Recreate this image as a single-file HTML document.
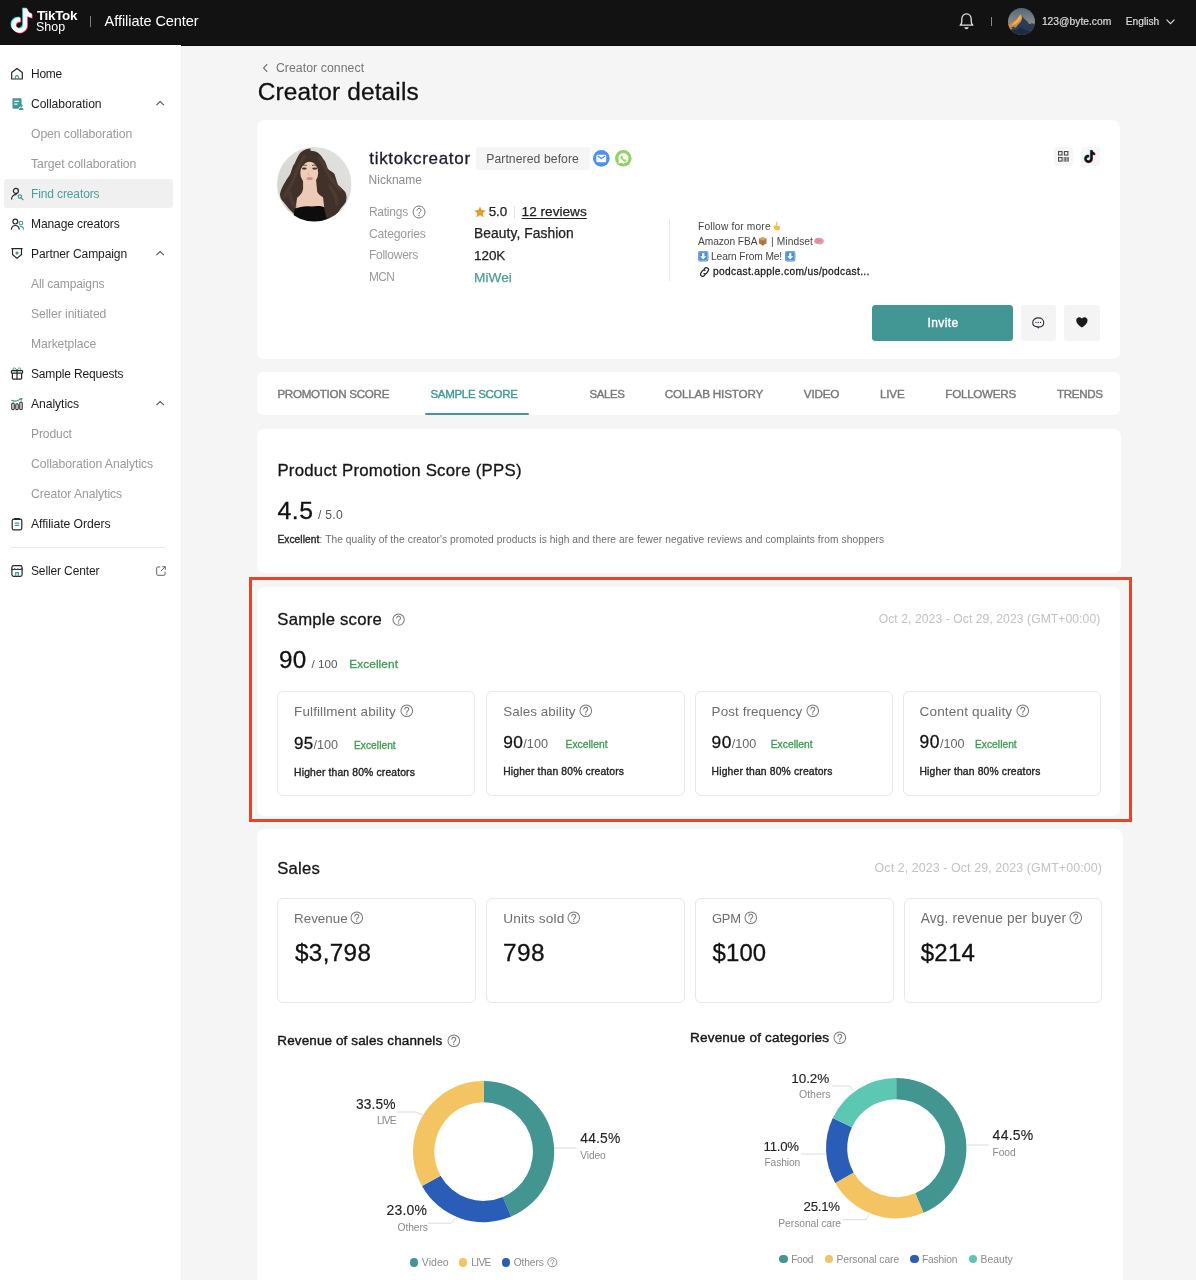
<!DOCTYPE html>
<html lang="en">
<head>
<meta charset="utf-8">
<title>Creator details</title>
<style>
*{box-sizing:border-box;margin:0;padding:0}
html,body{width:1196px;height:1280px;overflow:hidden;background:#f5f5f5;font-family:"Liberation Sans",sans-serif;color:#161616}
.a{position:absolute}
.t{position:absolute;white-space:nowrap}
svg{position:absolute;overflow:visible}
#hdr{position:absolute;left:0;top:0;width:1196px;height:45.6px;background:#121212;border-bottom:1px solid #0a0a0a}
#side{position:absolute;left:0;top:45px;width:180.5px;height:1236px;background:#fff;box-shadow:1px 0 2px rgba(0,0,0,.03)}
.card{position:absolute;background:#fff;border-radius:7px}
.sc{position:absolute;border:1px solid #e8e8e8;border-radius:6px;background:#fff}
.q{position:absolute;width:12px;height:12px}
</style>
</head>
<body>
<div id="hdr"></div>
<div id="side"></div>
<svg style="left:9px;top:7px" width="26" height="28" viewBox="0 0 17 17.5"><g transform="translate(0,.6)"><path d="M9.2 0h2.7c.2 1.7 1.3 3 3 3.3v2.7c-1.1 0-2.1-.3-3-.9v5.6c0 3-2.4 5.1-5.1 5.1C3.9 15.8 1.6 13.5 1.6 10.8c0-3.1 2.7-5.4 5.8-4.9v2.8c-1.5-.4-2.9.6-2.9 2.1 0 1.2 1 2.2 2.2 2.2 1.3 0 2.5-1 2.5-2.4z" fill="#25f4ee" transform="translate(-.55,-.45)"/><path d="M9.2 0h2.7c.2 1.7 1.3 3 3 3.3v2.7c-1.1 0-2.1-.3-3-.9v5.6c0 3-2.4 5.1-5.1 5.1C3.9 15.8 1.6 13.5 1.6 10.8c0-3.1 2.7-5.4 5.8-4.9v2.8c-1.5-.4-2.9.6-2.9 2.1 0 1.2 1 2.2 2.2 2.2 1.3 0 2.5-1 2.5-2.4z" fill="#fe2c55" transform="translate(.55,.45)"/><path d="M9.2 0h2.7c.2 1.7 1.3 3 3 3.3v2.7c-1.1 0-2.1-.3-3-.9v5.6c0 3-2.4 5.1-5.1 5.1C3.9 15.8 1.6 13.5 1.6 10.8c0-3.1 2.7-5.4 5.8-4.9v2.8c-1.5-.4-2.9.6-2.9 2.1 0 1.2 1 2.2 2.2 2.2 1.3 0 2.5-1 2.5-2.4z" fill="#fff"/></g></svg>
<div class="a" style="left:90px;top:15.5px;width:1px;height:11px;background:#7d7d7d;border-radius:0px;"></div>
<svg style="left:958px;top:11.5px" width="17" height="19" viewBox="0 0 17 19"><path d="M2.1 13.2c1.3-.9 1.7-2 1.7-3.6V7.3C3.8 4 5.7 1.8 8.5 1.8S13.2 4 13.2 7.3v2.3c0 1.6.4 2.7 1.7 3.6z" fill="none" stroke="#e2e2e2" stroke-width="1.3" stroke-linejoin="round"/><path d="M6.3 15.3h4.4c-.3 1.3-1.2 1.9-2.2 1.9s-1.9-.6-2.2-1.9z" fill="#e2e2e2"/></svg>
<div class="a" style="left:990.6px;top:17px;width:1px;height:8.5px;background:#8a8a8a;border-radius:0px;"></div>
<svg style="left:1008px;top:7.6px" width="27" height="27" viewBox="0 0 27 27"><defs><clipPath id="hc"><circle cx="13.5" cy="13.5" r="13.5"/></clipPath><filter id="hb"><feGaussianBlur stdDeviation=".45"/></filter><linearGradient id="sky" x1="0" y1="0" x2="0" y2="1"><stop offset="0" stop-color="#52667c"/><stop offset=".55" stop-color="#8a8c87"/></linearGradient></defs><g clip-path="url(#hc)"><rect width="27" height="27" fill="url(#sky)"/><g filter="url(#hb)"><path d="M-1 16.8L1.5 15.4L4.5 13.9L8.3 10.9L12.4 6.6L14.3 8.7L17.3 11.7L21.1 14.7L24.8 15.4L28 16.2V28H-1Z" fill="#2c3b54"/><path d="M-1 16.8L1.5 15.4L4.5 13.9L8.3 10.9L12.4 6.6L13.4 7.6L14.3 10.2L12.8 13.9L9.8 16.9L7.5 19.9L3.8 21.4L-1 22Z" fill="#cf8c42"/><path d="M12.4 6.6L13.2 7.5L13.4 10L11 13.5L7.5 16L3 17.5L6 14.5L9 11.5Z" fill="#eab062"/><path d="M19.5 14l2.5 1 1.8 1.2-3-.4z" fill="#cf8c42"/><path d="M-1 23l5-1.5 4 1 5-3 3 2 5 1.5 7 4V28H-1Z" fill="#1f2c42"/><path d="M3 19.5l3-1 2 1.5-3 1.5z" fill="#3a4860"/></g></g></svg>
<svg style="left:1165.5px;top:18.5px" width="9" height="5.5" viewBox="0 0 9 5.5"><path d="M.5 .6L4.5 4.6L8.5 .6" fill="none" stroke="#dcdcdc" stroke-width="1.1"/></svg>
<div class="a" style="left:4.2px;top:179.3px;width:169.2px;height:28.7px;background:#f0f0f0;border-radius:3px;"></div>
<svg style="left:10.4px;top:66.8px" width="14" height="14" viewBox="0 0 14 14"><path d="M1.7 5.5L7 1.5l5.3 4V12H1.7z" fill="none" stroke="#262626" stroke-width="1.2" stroke-linejoin="round"/><path d="M5.4 12V10.3a1.6 1.6 0 0 1 3.2 0V12" fill="none" stroke="#3f9a97" stroke-width="1.2"/></svg>
<svg style="left:11px;top:97px" width="14" height="14" viewBox="0 0 14 14"><path d="M1.5 1.2h8.3a.8.8 0 0 1 .8.8v5.3L7.3 11.8H2.3a.8.8 0 0 1-.8-.8z" fill="#3f9a97"/><rect x="3.3" y="3.7" width="4.8" height="1.2" fill="#fff"/><rect x="3.3" y="6.5" width="3.2" height="1.2" fill="#fff"/><circle cx="10.2" cy="8.6" r="1.45" fill="#3f9a97"/><path d="M7.9 12.9c0-1.5 1-2.5 2.3-2.5s2.3 1 2.3 2.5z" fill="#3f9a97"/></svg>
<svg style="left:10px;top:187px" width="15" height="14" viewBox="0 0 15 14"><circle cx="5.9" cy="3.9" r="2.5" fill="none" stroke="#262626" stroke-width="1.2"/><path d="M1.6 12.1c0-2.6 1.9-4.5 4.6-4.5" fill="none" stroke="#262626" stroke-width="1.2" stroke-linecap="round"/><circle cx="9.9" cy="9.6" r="1.7" fill="none" stroke="#3f9a97" stroke-width="1.2"/><path d="M11.2 10.9l1.9 1.8" stroke="#3f9a97" stroke-width="1.2" stroke-linecap="round"/></svg>
<svg style="left:10px;top:217.5px" width="15" height="13" viewBox="0 0 15 13"><circle cx="5.3" cy="3.6" r="2.4" fill="none" stroke="#262626" stroke-width="1.2"/><path d="M1.4 11.2c.3-2.3 1.8-3.7 3.9-3.7s3.6 1.4 3.9 3.7" fill="none" stroke="#262626" stroke-width="1.2" stroke-linecap="round"/><circle cx="10.9" cy="5" r="1.8" fill="none" stroke="#3f9a97" stroke-width="1.1"/><path d="M10.2 8.4c1.9-.3 3.1.9 3.3 2.7" fill="none" stroke="#3f9a97" stroke-width="1.1" stroke-linecap="round"/></svg>
<svg style="left:10.4px;top:247px" width="14" height="13" viewBox="0 0 14 13"><path d="M1.8 1.6h10.4M2.5 1.6v5.9L7 11.4l4.5-3.9V1.6" fill="none" stroke="#262626" stroke-width="1.2" stroke-linejoin="round" stroke-linecap="round"/><path d="M7 4.2l1.7 1.25-.65 2h-2.1l-.65-2z" fill="#3f9a97"/></svg>
<svg style="left:10.4px;top:366px" width="14" height="14.5" viewBox="0 0 14 14.5"><path d="M6.9 4.4C5.8 1.3 2.8 1.3 3.1 3.3c.2 1 1.7 1.1 3.8 1.1zM6.9 4.4C8 1.3 11 1.3 10.7 3.3c-.2 1-1.7 1.1-3.8 1.1z" fill="none" stroke="#3f9a97" stroke-width="1"/><rect x="1.4" y="4.6" width="11.2" height="2.6" rx=".8" fill="none" stroke="#262626" stroke-width="1.2"/><path d="M2.4 7.2v5.1a.8.8 0 0 0 .8.8h7.6a.8.8 0 0 0 .8-.8V7.2M7 4.6v8.5" fill="none" stroke="#262626" stroke-width="1.2"/></svg>
<svg style="left:10.4px;top:397px" width="14" height="14" viewBox="0 0 14 14"><rect x="1.8" y="6" width="2.4" height="6.7" rx="1.1" fill="none" stroke="#262626" stroke-width="1.1"/><rect x="5.8" y="6.8" width="2.4" height="5.9" rx="1.1" fill="none" stroke="#262626" stroke-width="1.1"/><rect x="9.8" y="5" width="2.4" height="7.7" rx="1.1" fill="none" stroke="#262626" stroke-width="1.1"/><path d="M1.6 3.3c2.5 1.4 5 1.3 8.3-.8" fill="none" stroke="#3f9a97" stroke-width="1.2" stroke-linecap="round"/><path d="M9.3.9l3.4.2-1.4 3z" fill="#3f9a97"/></svg>
<svg style="left:10.4px;top:516.5px" width="14" height="14" viewBox="0 0 14 14"><rect x="2.2" y="2.1" width="9.6" height="10.7" rx="1.5" fill="none" stroke="#262626" stroke-width="1.2"/><path d="M5 2h4" stroke="#262626" stroke-width="2.2" stroke-linecap="round"/><path d="M4.7 6.1h4.6M4.7 8.3h4.6" stroke="#3f9a97" stroke-width="1.2"/></svg>
<svg style="left:10.4px;top:564px" width="14" height="14" viewBox="0 0 14 14"><rect x="1.9" y="1.6" width="10.2" height="10.8" rx="1.8" fill="none" stroke="#262626" stroke-width="1.2"/><path d="M1.5 4.8c1 .9 2.2.9 3.2 0 1 .9 2.2.9 3.2 0 1 .9 2.2.9 3.2 0 .5.4.9.5 1.4.5" fill="none" stroke="#262626" stroke-width="1.1"/><path d="M5.7 12.2V8.6h2.6v3.6" fill="none" stroke="#3f9a97" stroke-width="1.2"/></svg>
<svg style="left:156.3px;top:101.4px" width="8.3" height="4.5" viewBox="0 0 8.3 4.5"><path d="M.4 4.2L4.15 .6L7.9 4.2" fill="none" stroke="#555" stroke-width="1.1"/></svg>
<svg style="left:156.3px;top:251.4px" width="8.3" height="4.5" viewBox="0 0 8.3 4.5"><path d="M.4 4.2L4.15 .6L7.9 4.2" fill="none" stroke="#555" stroke-width="1.1"/></svg>
<svg style="left:156.3px;top:401.4px" width="8.3" height="4.5" viewBox="0 0 8.3 4.5"><path d="M.4 4.2L4.15 .6L7.9 4.2" fill="none" stroke="#555" stroke-width="1.1"/></svg>
<div class="a" style="left:11px;top:546.5px;width:154px;height:1px;background:#e9e9e9;border-radius:0px;"></div>
<svg style="left:155.5px;top:565.8px" width="10" height="10" viewBox="0 0 10 10"><path d="M4.3 1H1.7a1 1 0 0 0-1 1v6.3a1 1 0 0 0 1 1H8a1 1 0 0 0 1-1V5.7" fill="none" stroke="#666" stroke-width="1"/><path d="M6.2.7h3.1v3.1M9.2.8L4.9 5.1" fill="none" stroke="#666" stroke-width="1"/></svg>
<svg style="left:261.5px;top:62.5px" width="7" height="10" viewBox="0 0 7 10"><path d="M5.2 1.2L1.6 5l3.6 3.8" fill="none" stroke="#6b6b6b" stroke-width="1.1"/></svg>
<div class="a" style="left:257px;top:120px;width:863.3px;height:238.8px;background:#fff;border-radius:7px;"></div>
<svg style="left:276.9px;top:146.9px" width="74.5" height="74.5" viewBox="0 0 100 100"><defs><clipPath id="ac"><circle cx="50" cy="50" r="50"/></clipPath><filter id="bl" x="-20%" y="-20%" width="140%" height="140%"><feGaussianBlur stdDeviation="0.9"/></filter><filter id="bl2" x="-20%" y="-20%" width="140%" height="140%"><feGaussianBlur stdDeviation="1.6"/></filter><linearGradient id="abg" x1="0" y1="1" x2="1" y2="0"><stop offset="0" stop-color="#d2d3ce"/><stop offset="1" stop-color="#e3e4e1"/></linearGradient></defs><g clip-path="url(#ac)"><rect width="100" height="100" fill="url(#abg)"/><g filter="url(#bl)"><path d="M45 2C38 2 32 6 29 11c-4 6-5 13-7 13-2 5-3 9-4 12-2 4-5 7-7 11-3 5-6 10-7 16 0 5 2 8 5 11l7 9 8 8 30 8 18-3 8-5c3-4 5-8 7-10 3-4 6-7 6-10 1-4 0-7-1-10-2-3-6-6-10-10-2-4-3-10-5-15-3-3-7-4-9-7-2-6-3-10-6-13-3-5-7-11-17-11z" fill="#40302a"/><path d="M35 40h17l2 20c1 3 4 5 9 8l2 14c-6 4-30 4-40 0l2-14c4-3 7-6 8-12z" fill="#eccab6"/><ellipse cx="43.3" cy="35" rx="12" ry="15.2" fill="#efccb8"/><path d="M30 32C29 20 34 11 45 10c8 1 12 8 12 20-2-5-5-9-12-11.500-6 1.500-11 5.500-15 13.500z" fill="#40302a"/><path d="M31 30c-2 8-2 16 1 24-3 6-7 12-8 20-1 6 0 12 2 18l-9-9-7-10 6-18 6-16z" fill="#40302a"/><path d="M55 28c2 8 3 15 1 24 2 5 5 8 7 13 2 8 1 18 4 30l8-1 6-12-3-20-8-20-9-14z" fill="#40302a"/><path d="M24 83c7-3 14-4 22-3 7-1 13-1 18 1l4 22H20z" fill="#0c0c0c"/><path d="M60 60c3 8 2 18 6 34l6 2 6-12-4-18z" fill="#40302a"/></g><g filter="url(#bl2)" fill="none" stroke="#6a5246" stroke-width="2.2" opacity=".7"><path d="M38 12c-8 8-12 20-16 32-3 8-9 14-12 24"/><path d="M56 14c8 8 10 20 16 28 4 6 10 10 14 18"/><path d="M70 50c4 10 12 14 10 28"/><path d="M18 60c-2 8 2 14 8 22"/></g><g filter="url(#bl)"><ellipse cx="36.6" cy="29" rx="3.4" ry="1.5" fill="#40393a"/><ellipse cx="50.6" cy="29" rx="3.4" ry="1.5" fill="#40393a"/><path d="M32.5 25.5c2.5-1.5 5-1.5 7.5-.5M47 25c2.5-1 5-1 7.5.5" stroke="#4a3a34" stroke-width="1.2" fill="none"/><ellipse cx="43.8" cy="42.3" rx="4.4" ry="2.1" fill="#d18e8c"/><path d="M43 32l-1.5 5.5h3" stroke="#dcb29c" stroke-width="1" fill="none"/></g></g></svg>
<div class="a" style="left:476px;top:147px;width:113.5px;height:22.6px;background:#f5f5f5;border-radius:3px;"></div>
<svg style="left:593px;top:150px" width="16.7" height="16.7" viewBox="0 0 16.7 16.7"><circle cx="8.35" cy="8.35" r="8.35" fill="#4a90f5"/><rect x="3.3" y="4.8" width="9.9" height="7.5" rx="1.2" fill="#fff"/><path d="M5.1 6.3l3.25 2.3 3.25-2.3" fill="none" stroke="#4a90f5" stroke-width="1.3" stroke-linecap="round" stroke-linejoin="round"/></svg>
<svg style="left:614.6px;top:150px" width="16.6" height="16.6" viewBox="0 0 16.6 16.6"><circle cx="8.3" cy="8.3" r="8.3" fill="#8ed45f"/><path d="M8.4 3.1a5.2 5.2 0 1 1-2.6 9.7l-2.6.8.8-2.5A5.2 5.2 0 0 1 8.4 3.1z" fill="#fff"/><path d="M6.3 5.8c.5-.5 1-.3 1.2.3l.3.8c.1.3 0 .5-.3.8.4.9 1 1.5 1.9 1.9.3-.3.6-.4.9-.2l.7.4c.5.3.6.8.1 1.3-.7.6-1.6.5-2.7-.1-1.3-.7-2.2-1.7-2.7-3-.3-.9-.1-1.6.6-2.2z" fill="#8ed45f"/></svg>
<svg style="left:412.1px;top:204.7px" width="14.0" height="14.0" viewBox="-7 -7 14 14"><circle r="6" fill="none" stroke="#7a7a7a" stroke-width="1.00"/><path d="M-2 -1.7a2 2 0 1 1 3.1 1.7c-.8.5-1.1.9-1.1 1.7" fill="none" stroke="#7a7a7a" stroke-width="1.00" stroke-linecap="round"/><circle cx="0" cy="3.6" r=".75" fill="#7a7a7a"/></svg>
<svg style="left:473.8px;top:206.2px" width="12" height="11.5" viewBox="0 0 24 23"><path d="M12 .8l3.5 7.3 8 1-5.9 5.5 1.5 7.9L12 18.6l-7.1 3.9 1.5-7.9L.5 9.1l8-1z" fill="#dfa02e"/></svg>
<div class="a" style="left:514px;top:205.5px;width:1px;height:13px;background:#e4e4e4;border-radius:0px;"></div>
<div class="a" style="left:668.5px;top:219px;width:1px;height:61.5px;background:#e6e6e6;border-radius:0px;"></div>
<svg style="left:771.5px;top:220.5px" width="9" height="10" viewBox="0 0 9 10"><path d="M4.6.6c.9-.3 1.2.3 1 .9L4.9 4.5 7.3 5c.9.3 1 1.1.8 2l-.4 1.5c-.3.9-.9 1.2-1.8 1.1L3.7 9.3C2.7 9.1 2.2 8.6 2 7.8L1.5 5.9c-.2-.8.4-1.4 1.2-1.3l.9.1z" fill="#f5c04a"/></svg>
<svg style="left:758.2px;top:235.8px" width="9.5" height="9.5" viewBox="0 0 10 10"><path d="M1 3l4-2 4 2v5L5 10 1 8z" fill="#b07a45"/><path d="M1 3l4 2 4-2-4-2z" fill="#d6a56a"/><path d="M5 5v5" stroke="#8a5a2d" stroke-width=".6"/></svg>
<svg style="left:813.2px;top:236.6px" width="11.5" height="8.5" viewBox="0 0 12 9"><path d="M1 4.5C1 2 3.5 .8 6 .8s5.4 1 5.4 3.6c0 1.7-1.3 2.8-3 3l-.8 1.2-1.2-1.1C3.5 7.6 1 6.8 1 4.5z" fill="#e79aa8"/><path d="M3 3.5c1-.8 2-.8 3 0s2 .8 3 0M3.5 5.5c1-.6 2-.6 3 0" fill="none" stroke="#c9687c" stroke-width=".6"/></svg>
<svg style="left:697.5px;top:250.6px" width="10.4" height="10.4" viewBox="0 0 10.4 10.4"><rect width="10.4" height="10.4" rx="2" fill="#4f8fd6"/><rect x=".8" y=".8" width="8.8" height="8.8" rx="1.4" fill="none" stroke="#9cc2ec" stroke-width=".7"/><path d="M4 2.3h2.4v3h1.9L5.2 8.6 2.1 5.3H4z" fill="#fff"/></svg>
<svg style="left:785.4px;top:250.6px" width="10.4" height="10.4" viewBox="0 0 10.4 10.4"><rect width="10.4" height="10.4" rx="2" fill="#4f8fd6"/><rect x=".8" y=".8" width="8.8" height="8.8" rx="1.4" fill="none" stroke="#9cc2ec" stroke-width=".7"/><path d="M4 2.3h2.4v3h1.9L5.2 8.6 2.1 5.3H4z" fill="#fff"/></svg>
<svg style="left:699px;top:266.8px" width="11" height="10" viewBox="0 0 11 10"><g fill="none" stroke="#222" stroke-width="1.2" stroke-linecap="round" transform="rotate(-12 5.5 5)"><path d="M4.6 6.4a2.1 2.1 0 0 0 3 0l1.7-1.7a2.1 2.1 0 0 0-3-3l-.8.8"/><path d="M6.4 3.6a2.1 2.1 0 0 0-3 0L1.7 5.3a2.1 2.1 0 0 0 3 3l.8-.8"/></g></svg>
<div class="a" style="left:1054px;top:146.6px;width:19.4px;height:19.5px;background:#f6f6f6;border-radius:3.5px;"></div>
<div class="a" style="left:1080.5px;top:146.6px;width:19.2px;height:19.5px;background:#f6f6f6;border-radius:3.5px;"></div>
<svg style="left:1057.8px;top:151px" width="10.5" height="10.7" viewBox="0 0 10.5 10.7"><g fill="none" stroke="#4a4a4a" stroke-width="1.1"><rect x=".55" y=".55" width="3.5" height="3.5"/><rect x="6.4" y=".55" width="3.5" height="3.5"/><rect x=".55" y="6.6" width="3.5" height="3.5"/></g><path d="M6.2 6v4.7M7.7 6v4.7M9.1 6v4.7M10.3 6v4.7" stroke="#4a4a4a" stroke-width=".9"/></svg>
<svg style="left:1082.8px;top:149.7px" width="13.5" height="13.5" viewBox="0 0 17 16.5"><path d="M9.2 0h2.7c.2 1.7 1.3 3 3 3.3v2.7c-1.1 0-2.1-.3-3-.9v5.6c0 3-2.4 5.1-5.1 5.1C3.9 15.8 1.6 13.5 1.6 10.8c0-3.1 2.7-5.4 5.8-4.9v2.8c-1.5-.4-2.9.6-2.9 2.1 0 1.2 1 2.2 2.2 2.2 1.3 0 2.5-1 2.5-2.4z" fill="#25f4ee" transform="translate(-.7,-.5)"/><path d="M9.2 0h2.7c.2 1.7 1.3 3 3 3.3v2.7c-1.1 0-2.1-.3-3-.9v5.6c0 3-2.4 5.1-5.1 5.1C3.9 15.8 1.6 13.5 1.6 10.8c0-3.1 2.7-5.4 5.8-4.9v2.8c-1.5-.4-2.9.6-2.9 2.1 0 1.2 1 2.2 2.2 2.2 1.3 0 2.5-1 2.5-2.4z" fill="#fe2c55" transform="translate(.7,.5)"/><path d="M9.2 0h2.7c.2 1.7 1.3 3 3 3.3v2.7c-1.1 0-2.1-.3-3-.9v5.6c0 3-2.4 5.1-5.1 5.1C3.9 15.8 1.6 13.5 1.6 10.8c0-3.1 2.7-5.4 5.8-4.9v2.8c-1.5-.4-2.9.6-2.9 2.1 0 1.2 1 2.2 2.2 2.2 1.3 0 2.5-1 2.5-2.4z" fill="#111"/></svg>
<div class="a" style="left:872.3px;top:305px;width:141px;height:35.8px;background:#429693;border-radius:3.5px;"></div>
<div class="a" style="left:1020.6px;top:305px;width:35.7px;height:35.8px;background:#f4f4f4;border-radius:3px;"></div>
<div class="a" style="left:1064.1px;top:305px;width:35.7px;height:35.8px;background:#f4f4f4;border-radius:3px;"></div>
<svg style="left:1032.4px;top:317px" width="12.5" height="12" viewBox="0 0 12.5 12"><path d="M6.2 .9c3.1 0 5.5 1.9 5.5 4.5S9.6 9.8 6.9 9.9l-.6.9-.7-.9C2.9 9.7.7 7.9.7 5.4S3.1.9 6.2.9z" fill="none" stroke="#2a2d3e" stroke-width="1.1"/><circle cx="3.9" cy="5.4" r=".65" fill="#2a2d3e"/><circle cx="6.2" cy="5.4" r=".65" fill="#2a2d3e"/><circle cx="8.5" cy="5.4" r=".65" fill="#2a2d3e"/></svg>
<svg style="left:1076px;top:317.4px" width="11.8" height="10.8" viewBox="0 0 24 22"><path d="M12 21.5C5.5 16.5.5 12.3.5 6.9.5 3.3 3.2.6 6.6.6c2.2 0 4.2 1.1 5.4 2.9C13.2 1.7 15.2.6 17.4.6c3.4 0 6.1 2.7 6.1 6.3 0 5.4-5 9.6-11.5 14.6z" fill="#1a1a1a"/></svg>
<div class="a" style="left:257px;top:372.2px;width:863.3px;height:42.6px;background:#fff;border-radius:6px;"></div>
<div class="a" style="left:425px;top:412.8px;width:103.8px;height:2.4px;background:#3f9a97;border-radius:1.2px;"></div>
<div class="a" style="left:257px;top:429.4px;width:863.5px;height:143.9px;background:#fff;border-radius:7px;"></div>
<div class="a" style="left:249px;top:577px;width:883.3px;height:245px;border:3px solid #e8432c"></div>
<div class="a" style="left:257px;top:587px;width:863.3px;height:228.8px;background:#fff;border-radius:7px;"></div>
<svg style="left:391.6px;top:612.9px" width="13.2" height="13.2" viewBox="-7 -7 14 14"><circle r="6" fill="none" stroke="#777" stroke-width="1.07"/><path d="M-2 -1.7a2 2 0 1 1 3.1 1.7c-.8.5-1.1.9-1.1 1.7" fill="none" stroke="#777" stroke-width="1.07" stroke-linecap="round"/><circle cx="0" cy="3.6" r=".75" fill="#777"/></svg>
<div class="sc" style="left:277.3px;top:691.2px;width:198.2px;height:104.4px"></div>
<div class="sc" style="left:486.4px;top:691.2px;width:198.2px;height:104.4px"></div>
<div class="sc" style="left:694.8px;top:691.2px;width:198.2px;height:104.4px"></div>
<div class="sc" style="left:902.7px;top:691.2px;width:198.2px;height:104.4px"></div>
<svg style="left:400.0px;top:704.1px" width="13.6" height="13.6" viewBox="-7 -7 14 14"><circle r="6" fill="none" stroke="#777" stroke-width="1.03"/><path d="M-2 -1.7a2 2 0 1 1 3.1 1.7c-.8.5-1.1.9-1.1 1.7" fill="none" stroke="#777" stroke-width="1.03" stroke-linecap="round"/><circle cx="0" cy="3.6" r=".75" fill="#777"/></svg>
<svg style="left:579.2px;top:704.1px" width="13.6" height="13.6" viewBox="-7 -7 14 14"><circle r="6" fill="none" stroke="#777" stroke-width="1.03"/><path d="M-2 -1.7a2 2 0 1 1 3.1 1.7c-.8.5-1.1.9-1.1 1.7" fill="none" stroke="#777" stroke-width="1.03" stroke-linecap="round"/><circle cx="0" cy="3.6" r=".75" fill="#777"/></svg>
<svg style="left:806.4px;top:704.1px" width="13.6" height="13.6" viewBox="-7 -7 14 14"><circle r="6" fill="none" stroke="#777" stroke-width="1.03"/><path d="M-2 -1.7a2 2 0 1 1 3.1 1.7c-.8.5-1.1.9-1.1 1.7" fill="none" stroke="#777" stroke-width="1.03" stroke-linecap="round"/><circle cx="0" cy="3.6" r=".75" fill="#777"/></svg>
<svg style="left:1016.2px;top:704.1px" width="13.6" height="13.6" viewBox="-7 -7 14 14"><circle r="6" fill="none" stroke="#777" stroke-width="1.03"/><path d="M-2 -1.7a2 2 0 1 1 3.1 1.7c-.8.5-1.1.9-1.1 1.7" fill="none" stroke="#777" stroke-width="1.03" stroke-linecap="round"/><circle cx="0" cy="3.6" r=".75" fill="#777"/></svg>
<div class="a" style="left:257px;top:828.8px;width:865.7px;height:470px;background:#fff;border-radius:7px;"></div>
<div class="sc" style="left:277.3px;top:897.6px;width:198.4px;height:105px"></div>
<div class="sc" style="left:486.4px;top:897.6px;width:198.4px;height:105px"></div>
<div class="sc" style="left:695.3px;top:897.6px;width:198.4px;height:105px"></div>
<div class="sc" style="left:903.9px;top:897.6px;width:198.4px;height:105px"></div>
<svg style="left:350.0px;top:910.7px" width="13.6" height="13.6" viewBox="-7 -7 14 14"><circle r="6" fill="none" stroke="#777" stroke-width="1.03"/><path d="M-2 -1.7a2 2 0 1 1 3.1 1.7c-.8.5-1.1.9-1.1 1.7" fill="none" stroke="#777" stroke-width="1.03" stroke-linecap="round"/><circle cx="0" cy="3.6" r=".75" fill="#777"/></svg>
<svg style="left:567.1px;top:910.7px" width="13.6" height="13.6" viewBox="-7 -7 14 14"><circle r="6" fill="none" stroke="#777" stroke-width="1.03"/><path d="M-2 -1.7a2 2 0 1 1 3.1 1.7c-.8.5-1.1.9-1.1 1.7" fill="none" stroke="#777" stroke-width="1.03" stroke-linecap="round"/><circle cx="0" cy="3.6" r=".75" fill="#777"/></svg>
<svg style="left:743.8px;top:910.7px" width="13.6" height="13.6" viewBox="-7 -7 14 14"><circle r="6" fill="none" stroke="#777" stroke-width="1.03"/><path d="M-2 -1.7a2 2 0 1 1 3.1 1.7c-.8.5-1.1.9-1.1 1.7" fill="none" stroke="#777" stroke-width="1.03" stroke-linecap="round"/><circle cx="0" cy="3.6" r=".75" fill="#777"/></svg>
<svg style="left:1068.5px;top:910.7px" width="13.6" height="13.6" viewBox="-7 -7 14 14"><circle r="6" fill="none" stroke="#777" stroke-width="1.03"/><path d="M-2 -1.7a2 2 0 1 1 3.1 1.7c-.8.5-1.1.9-1.1 1.7" fill="none" stroke="#777" stroke-width="1.03" stroke-linecap="round"/><circle cx="0" cy="3.6" r=".75" fill="#777"/></svg>
<svg style="left:446.7px;top:1033.9px" width="13.6" height="13.6" viewBox="-7 -7 14 14"><circle r="6" fill="none" stroke="#777" stroke-width="1.03"/><path d="M-2 -1.7a2 2 0 1 1 3.1 1.7c-.8.5-1.1.9-1.1 1.7" fill="none" stroke="#777" stroke-width="1.03" stroke-linecap="round"/><circle cx="0" cy="3.6" r=".75" fill="#777"/></svg>
<svg style="left:833.3px;top:1030.7px" width="13.6" height="13.6" viewBox="-7 -7 14 14"><circle r="6" fill="none" stroke="#777" stroke-width="1.03"/><path d="M-2 -1.7a2 2 0 1 1 3.1 1.7c-.8.5-1.1.9-1.1 1.7" fill="none" stroke="#777" stroke-width="1.03" stroke-linecap="round"/><circle cx="0" cy="3.6" r=".75" fill="#777"/></svg>
<svg style="left:412.8px;top:1081.0px" width="141.2" height="141.2" viewBox="-70.6 -70.6 141.2 141.2"><path d="M0.00 -70.60A70.6 70.6 0 0 1 27.59 64.99L19.26 45.38A49.3 49.3 0 0 0 0.00 -49.30Z" fill="#439591"/><path d="M27.59 64.99A70.6 70.6 0 0 1 -61.63 34.44L-43.04 24.05A49.3 49.3 0 0 0 19.26 45.38Z" fill="#2a5db8"/><path d="M-61.63 34.44A70.6 70.6 0 0 1 -0.00 -70.60L-0.00 -49.30A49.3 49.3 0 0 0 -43.04 24.05Z" fill="#f5c462"/></svg>
<svg style="left:552.6px;top:1147.4px" width="24.7" height="2.0"><path d="M1.0 1.0L23.7 1.0" fill="none" stroke="#dcdcdc" stroke-width="1"/></svg>
<svg style="left:395.5px;top:1110.5px" width="29.3" height="6.0"><path d="M1.0 1.0L19.9 1.0L28.3 5.0" fill="none" stroke="#dcdcdc" stroke-width="1"/></svg>
<svg style="left:427.0px;top:1216.5px" width="29.5" height="7.2"><path d="M1.0 6.2L24.5 6.2L28.5 1.0" fill="none" stroke="#dcdcdc" stroke-width="1"/></svg>
<div class="a" style="left:410.0px;top:1258.2px;width:8.4px;height:8.4px;border-radius:50%;background:#439591"></div>
<div class="a" style="left:458.5px;top:1258.2px;width:8.4px;height:8.4px;border-radius:50%;background:#f5c462"></div>
<div class="a" style="left:501.5px;top:1258.2px;width:8.4px;height:8.4px;border-radius:50%;background:#2a5db8"></div>
<svg style="left:546.5px;top:1257.1px" width="10.6" height="10.6" viewBox="-7 -7 14 14"><circle r="6" fill="none" stroke="#8a8a8a" stroke-width="1.26"/><path d="M-2 -1.7a2 2 0 1 1 3.1 1.7c-.8.5-1.1.9-1.1 1.7" fill="none" stroke="#8a8a8a" stroke-width="1.26" stroke-linecap="round"/><circle cx="0" cy="3.6" r=".75" fill="#8a8a8a"/></svg>
<svg style="left:826.1px;top:1077.9px" width="140.4" height="140.4" viewBox="-70.2 -70.2 140.4 140.4"><path d="M0.00 -70.20A70.2 70.2 0 0 1 27.32 64.67L19.07 45.14A49 49 0 0 0 0.00 -49.00Z" fill="#439591"/><path d="M27.32 64.67A70.2 70.2 0 0 1 -60.98 34.78L-42.56 24.28A49 49 0 0 0 19.07 45.14Z" fill="#f5c462"/><path d="M-60.98 34.78A70.2 70.2 0 0 1 -63.41 -30.11L-44.26 -21.02A49 49 0 0 0 -42.56 24.28Z" fill="#2a5db8"/><path d="M-63.41 -30.11A70.2 70.2 0 0 1 -0.00 -70.20L-0.00 -49.00A49 49 0 0 0 -44.26 -21.02Z" fill="#5cc8b4"/></svg>
<svg style="left:965.3px;top:1144.2px" width="24.7" height="2.0"><path d="M1.0 1.0L23.7 1.0" fill="none" stroke="#dcdcdc" stroke-width="1"/></svg>
<svg style="left:830.7px;top:1085.2px" width="23.7" height="7.2"><path d="M1.0 1.0L18.7 1.0L22.7 6.2" fill="none" stroke="#dcdcdc" stroke-width="1"/></svg>
<svg style="left:800.2px;top:1153.0px" width="26.5" height="2.0"><path d="M1.0 1.0L25.5 1.0" fill="none" stroke="#dcdcdc" stroke-width="1"/></svg>
<svg style="left:841.5px;top:1212.8px" width="28.1" height="7.7"><path d="M1.0 6.7L23.9 6.7L27.1 1.0" fill="none" stroke="#dcdcdc" stroke-width="1"/></svg>
<div class="a" style="left:779.3px;top:1255.0px;width:8.4px;height:8.4px;border-radius:50%;background:#439591"></div>
<div class="a" style="left:824.7px;top:1255.0px;width:8.4px;height:8.4px;border-radius:50%;background:#f5c462"></div>
<div class="a" style="left:910.2px;top:1255.0px;width:8.4px;height:8.4px;border-radius:50%;background:#2a5db8"></div>
<div class="a" style="left:968.8px;top:1255.0px;width:8.4px;height:8.4px;border-radius:50%;background:#5cc8b4"></div>
<div id="tx" style="position:absolute;left:0;top:0;width:1196px;height:1280px;will-change:transform">
<div class="t" style="left:36.9px;top:7px;font-size:13.45px;line-height:17px;color:#fff;letter-spacing:-0.29px;font-weight:bold;">TikTok</div>
<div class="t" style="left:36.0px;top:19px;font-size:12.4px;line-height:16px;color:#fff;letter-spacing:0.06px;">Shop</div>
<div class="t" style="left:104.6px;top:12px;font-size:14.5px;line-height:18px;color:#fff;letter-spacing:-0.05px;">Affiliate Center</div>
<div class="t" style="left:1041.9px;top:15px;font-size:10.31px;line-height:13px;color:#dcdcdc;-webkit-text-stroke:.2px #dcdcdc">123@byte.com</div>
<div class="t" style="left:1125.8px;top:15px;font-size:10.24px;line-height:13px;color:#dcdcdc;letter-spacing:-0.03px;-webkit-text-stroke:.2px #dcdcdc">English</div>
<div class="t" style="left:31.0px;top:66px;font-size:11.96px;line-height:16px;color:#1d1d1d;letter-spacing:-0.23px;">Home</div>
<div class="t" style="left:31.0px;top:96px;font-size:12.14px;line-height:16px;color:#1d1d1d;letter-spacing:-0.07px;">Collaboration</div>
<div class="t" style="left:31.0px;top:126px;font-size:12.18px;line-height:16px;color:#999;letter-spacing:-0.06px;">Open collaboration</div>
<div class="t" style="left:31.0px;top:156px;font-size:12.18px;line-height:16px;color:#999;letter-spacing:-0.05px;">Target collaboration</div>
<div class="t" style="left:31.0px;top:186px;font-size:12.02px;line-height:16px;color:#4a9f9c;letter-spacing:-0.13px;">Find creators</div>
<div class="t" style="left:31.0px;top:216px;font-size:12.06px;line-height:16px;color:#1d1d1d;letter-spacing:-0.12px;">Manage creators</div>
<div class="t" style="left:31.0px;top:246px;font-size:12.07px;line-height:16px;color:#1d1d1d;letter-spacing:-0.12px;">Partner Campaign</div>
<div class="t" style="left:31.0px;top:276px;font-size:12.05px;line-height:16px;color:#999;letter-spacing:-0.12px;">All campaigns</div>
<div class="t" style="left:31.0px;top:306px;font-size:12.15px;line-height:16px;color:#999;letter-spacing:-0.06px;">Seller initiated</div>
<div class="t" style="left:31.0px;top:336px;font-size:12.14px;line-height:16px;color:#999;letter-spacing:-0.08px;">Marketplace</div>
<div class="t" style="left:31.0px;top:366px;font-size:12.0px;line-height:16px;color:#1d1d1d;letter-spacing:-0.16px;">Sample Requests</div>
<div class="t" style="left:31.0px;top:396px;font-size:12.16px;line-height:16px;color:#1d1d1d;letter-spacing:-0.06px;">Analytics</div>
<div class="t" style="left:31.0px;top:426px;font-size:12.08px;line-height:16px;color:#999;letter-spacing:-0.11px;">Product</div>
<div class="t" style="left:31.0px;top:456px;font-size:12.2px;line-height:16px;color:#999;letter-spacing:-0.05px;">Collaboration Analytics</div>
<div class="t" style="left:31.0px;top:486px;font-size:12.18px;line-height:16px;color:#999;letter-spacing:-0.05px;">Creator Analytics</div>
<div class="t" style="left:31.0px;top:516px;font-size:12.18px;line-height:16px;color:#1d1d1d;letter-spacing:-0.05px;">Affiliate Orders</div>
<div class="t" style="left:31.0px;top:563px;font-size:12.01px;line-height:16px;color:#1d1d1d;letter-spacing:-0.13px;">Seller Center</div>
<div class="t" style="left:275.9px;top:60px;font-size:12.31px;line-height:16px;color:#757575;letter-spacing:0.05px;">Creator connect</div>
<div class="t" style="left:257.8px;top:77px;font-size:24.39px;line-height:29px;color:#121212;letter-spacing:0.17px;-webkit-text-stroke:.3px #121212">Creator details</div>
<div class="t" style="left:369.3px;top:148px;font-size:17px;line-height:21px;color:#1b1c30;letter-spacing:0.68px;-webkit-text-stroke:.3px #1b1c30">tiktokcreator</div>
<div class="t" style="left:486.2px;top:151px;font-size:12.18px;line-height:16px;color:#555;letter-spacing:0.09px;">Partnered before</div>
<div class="t" style="left:368.6px;top:172px;font-size:12.0px;line-height:16px;color:#8c8c8c;">Nickname</div>
<div class="t" style="left:368.9px;top:204px;font-size:12.0px;line-height:16px;color:#9a9a9a;letter-spacing:-0.24px;">Ratings</div>
<div class="t" style="left:368.9px;top:226px;font-size:12.13px;line-height:16px;color:#9a9a9a;letter-spacing:-0.18px;">Categories</div>
<div class="t" style="left:368.9px;top:247px;font-size:12.0px;line-height:16px;color:#9a9a9a;letter-spacing:-0.24px;">Followers</div>
<div class="t" style="left:368.9px;top:269px;font-size:11.88px;line-height:16px;color:#9a9a9a;letter-spacing:-0.58px;">MCN</div>
<div class="t" style="left:488.7px;top:203px;font-size:13.45px;line-height:17px;color:#222;letter-spacing:-0.07px;-webkit-text-stroke:.25px #222">5.0</div>
<div class="t" style="left:521.6px;top:203px;font-size:13.62px;line-height:17px;color:#222;letter-spacing:0.01px;text-decoration:underline;text-underline-offset:2px;text-decoration-thickness:1px;-webkit-text-stroke:.25px #222">12 reviews</div>
<div class="t" style="left:474.1px;top:225px;font-size:13.77px;line-height:17px;color:#222;letter-spacing:0.08px;-webkit-text-stroke:.25px #222">Beauty, Fashion</div>
<div class="t" style="left:474.1px;top:247px;font-size:13.48px;line-height:17px;color:#222;letter-spacing:-0.07px;-webkit-text-stroke:.25px #222">120K</div>
<div class="t" style="left:474.1px;top:269px;font-size:13.63px;line-height:17px;color:#4a9e9b;letter-spacing:0.02px;-webkit-text-stroke:.25px #4a9e9b">MiWei</div>
<div class="t" style="left:698.0px;top:220px;font-size:10.2px;line-height:13px;color:#444;letter-spacing:0.17px;">Follow for more</div>
<div class="t" style="left:698.0px;top:235px;font-size:10.2px;line-height:13px;color:#444;letter-spacing:-0.05px;">Amazon FBA</div>
<div class="t" style="left:771.0px;top:235px;font-size:10.2px;line-height:13px;color:#444;letter-spacing:0.10px;">| Mindset</div>
<div class="t" style="left:711.0px;top:250px;font-size:10.2px;line-height:13px;color:#444;letter-spacing:-0.10px;">Learn From Me!</div>
<div class="t" style="left:713.0px;top:265px;font-size:10.2px;line-height:13px;color:#1d1d1d;letter-spacing:0.34px;-webkit-text-stroke:.28px #1d1d1d">podcast.apple.com/us/podcast...</div>
<div class="t" style="left:927.5px;top:315px;font-size:12px;line-height:16px;color:#fff;letter-spacing:0.39px;-webkit-text-stroke:.4px #fff">Invite</div>
<div class="t" style="left:277.4px;top:387px;font-size:11.59px;line-height:14px;color:#787878;letter-spacing:-0.27px;-webkit-text-stroke:.4px #787878">PROMOTION SCORE</div>
<div class="t" style="left:430.4px;top:387px;font-size:11.53px;line-height:14px;color:#3f9a97;letter-spacing:-0.31px;-webkit-text-stroke:.4px #3f9a97">SAMPLE SCORE</div>
<div class="t" style="left:589.5px;top:387px;font-size:11.43px;line-height:14px;color:#787878;letter-spacing:-0.37px;-webkit-text-stroke:.4px #787878">SALES</div>
<div class="t" style="left:664.8px;top:386px;font-size:11.69px;line-height:15px;color:#787878;letter-spacing:-0.19px;-webkit-text-stroke:.4px #787878">COLLAB HISTORY</div>
<div class="t" style="left:803.8px;top:386px;font-size:11.69px;line-height:15px;color:#787878;letter-spacing:-0.19px;-webkit-text-stroke:.4px #787878">VIDEO</div>
<div class="t" style="left:880.0px;top:386px;font-size:11.65px;line-height:15px;color:#787878;letter-spacing:-0.19px;-webkit-text-stroke:.4px #787878">LIVE</div>
<div class="t" style="left:945.3px;top:386px;font-size:11.63px;line-height:15px;color:#787878;letter-spacing:-0.26px;-webkit-text-stroke:.4px #787878">FOLLOWERS</div>
<div class="t" style="left:1057.0px;top:387px;font-size:11.57px;line-height:14px;color:#787878;letter-spacing:-0.30px;-webkit-text-stroke:.4px #787878">TRENDS</div>
<div class="t" style="left:277.4px;top:460px;font-size:16.81px;line-height:21px;color:#161616;letter-spacing:0.25px;-webkit-text-stroke:.3px #161616">Product Promotion Score (PPS)</div>
<div class="t" style="left:277.4px;top:496px;font-size:24.78px;line-height:29px;color:#121212;letter-spacing:0.55px;-webkit-text-stroke:.3px #121212">4.5</div>
<div class="t" style="left:318.0px;top:507px;font-size:12.08px;line-height:16px;color:#555;letter-spacing:0.30px;">/ 5.0</div>
<div class="t" style="left:277.4px;top:533px;font-size:10.19px;line-height:13px;color:#6e6e6e;letter-spacing:0.09px;"><span style="color:#222;-webkit-text-stroke:.35px #222">Excellent</span>: The quality of the creator's promoted products is high and there are fewer negative reviews and complaints from shoppers</div>
<div class="t" style="left:277.3px;top:609px;font-size:16.72px;line-height:21px;color:#161616;letter-spacing:0.21px;-webkit-text-stroke:.3px #161616">Sample score</div>
<div class="t" style="left:878.7px;top:611px;font-size:12.15px;line-height:16px;color:#c2c2c2;letter-spacing:0.07px;">Oct 2, 2023 - Oct 29, 2023 (GMT+00:00)</div>
<div class="t" style="left:279.0px;top:645px;font-size:24.21px;line-height:29px;color:#121212;letter-spacing:0.34px;-webkit-text-stroke:.3px #121212">90</div>
<div class="t" style="left:311.4px;top:656px;font-size:11.62px;line-height:15px;color:#555;letter-spacing:0.05px;">/ 100</div>
<div class="t" style="left:349.2px;top:656px;font-size:11.83px;line-height:16px;color:#3a9c4e;letter-spacing:0.10px;-webkit-text-stroke:.3px #3a9c4e">Excellent</div>
<div class="t" style="left:294.1px;top:703px;font-size:13.48px;line-height:17px;color:#6e6e6e;letter-spacing:0.11px;">Fulfillment ability</div>
<div class="t" style="left:294.1px;top:733px;font-size:16.97px;line-height:21px;color:#121212;letter-spacing:0.21px;-webkit-text-stroke:.3px #121212">95</div>
<div class="t" style="left:313.4px;top:737px;font-size:12.62px;line-height:16px;color:#666;letter-spacing:0.01px;">/100</div>
<div class="t" style="left:354.0px;top:739px;font-size:10.24px;line-height:13px;color:#3a9c4e;letter-spacing:0.02px;-webkit-text-stroke:.3px #3a9c4e">Excellent</div>
<div class="t" style="left:294.1px;top:766px;font-size:10.34px;line-height:13px;color:#222;letter-spacing:0.16px;-webkit-text-stroke:.35px #222">Higher than 80% creators</div>
<div class="t" style="left:503.2px;top:703px;font-size:13.38px;line-height:17px;color:#6e6e6e;letter-spacing:0.07px;">Sales ability</div>
<div class="t" style="left:503.2px;top:731px;font-size:17.33px;line-height:22px;color:#121212;letter-spacing:0.41px;-webkit-text-stroke:.3px #121212">90</div>
<div class="t" style="left:523.3px;top:736px;font-size:12.7px;line-height:16px;color:#666;letter-spacing:0.05px;">/100</div>
<div class="t" style="left:565.5px;top:738px;font-size:10.29px;line-height:13px;color:#3a9c4e;letter-spacing:0.04px;-webkit-text-stroke:.3px #3a9c4e">Excellent</div>
<div class="t" style="left:503.2px;top:765px;font-size:10.34px;line-height:13px;color:#222;letter-spacing:0.16px;-webkit-text-stroke:.35px #222">Higher than 80% creators</div>
<div class="t" style="left:711.6px;top:703px;font-size:13.41px;line-height:17px;color:#6e6e6e;letter-spacing:0.10px;">Post frequency</div>
<div class="t" style="left:711.6px;top:731px;font-size:17.38px;line-height:22px;color:#121212;letter-spacing:0.43px;-webkit-text-stroke:.3px #121212">90</div>
<div class="t" style="left:731.8px;top:736px;font-size:12.6px;line-height:16px;color:#666;">/100</div>
<div class="t" style="left:770.7px;top:738px;font-size:10.29px;line-height:13px;color:#3a9c4e;letter-spacing:0.04px;-webkit-text-stroke:.3px #3a9c4e">Excellent</div>
<div class="t" style="left:711.6px;top:765px;font-size:10.34px;line-height:13px;color:#222;letter-spacing:0.16px;-webkit-text-stroke:.35px #222">Higher than 80% creators</div>
<div class="t" style="left:919.5px;top:703px;font-size:13.56px;line-height:17px;color:#6e6e6e;letter-spacing:0.16px;">Content quality</div>
<div class="t" style="left:919.5px;top:731px;font-size:17.43px;line-height:22px;color:#121212;letter-spacing:0.55px;-webkit-text-stroke:.3px #121212">90</div>
<div class="t" style="left:940.0px;top:736px;font-size:12.6px;line-height:16px;color:#666;">/100</div>
<div class="t" style="left:975.0px;top:738px;font-size:10.24px;line-height:13px;color:#3a9c4e;letter-spacing:0.02px;-webkit-text-stroke:.3px #3a9c4e">Excellent</div>
<div class="t" style="left:919.5px;top:765px;font-size:10.34px;line-height:13px;color:#222;letter-spacing:0.16px;-webkit-text-stroke:.35px #222">Higher than 80% creators</div>
<div class="t" style="left:277.3px;top:858px;font-size:16.67px;line-height:21px;color:#161616;letter-spacing:0.19px;-webkit-text-stroke:.3px #161616">Sales</div>
<div class="t" style="left:874.6px;top:860px;font-size:12.4px;line-height:16px;color:#c2c2c2;letter-spacing:0.10px;">Oct 2, 2023 - Oct 29, 2023 (GMT+00:00)</div>
<div class="t" style="left:294.1px;top:910px;font-size:13.39px;line-height:17px;color:#6e6e6e;letter-spacing:-0.01px;">Revenue</div>
<div class="t" style="left:295.0px;top:938px;font-size:24.26px;line-height:29px;color:#121212;letter-spacing:0.34px;-webkit-text-stroke:.3px #121212">$3,798</div>
<div class="t" style="left:503.2px;top:910px;font-size:13.66px;line-height:17px;color:#6e6e6e;letter-spacing:0.12px;">Units sold</div>
<div class="t" style="left:502.9px;top:938px;font-size:24.42px;line-height:29px;color:#121212;letter-spacing:0.45px;-webkit-text-stroke:.3px #121212">798</div>
<div class="t" style="left:712.1px;top:910px;font-size:12.96px;line-height:17px;color:#6e6e6e;letter-spacing:-0.34px;">GPM</div>
<div class="t" style="left:712.5px;top:938px;font-size:23.89px;line-height:29px;color:#121212;letter-spacing:0.16px;-webkit-text-stroke:.3px #121212">$100</div>
<div class="t" style="left:920.7px;top:910px;font-size:13.71px;line-height:17px;color:#6e6e6e;letter-spacing:0.15px;">Avg. revenue per buyer</div>
<div class="t" style="left:920.8px;top:938px;font-size:23.98px;line-height:29px;color:#121212;letter-spacing:0.21px;-webkit-text-stroke:.3px #121212">$214</div>
<div class="t" style="left:277.3px;top:1032px;font-size:13.48px;line-height:17px;color:#161616;letter-spacing:0.13px;-webkit-text-stroke:.4px #161616">Revenue of sales channels</div>
<div class="t" style="left:690.0px;top:1029px;font-size:13.57px;line-height:17px;color:#161616;letter-spacing:0.17px;-webkit-text-stroke:.4px #161616">Revenue of categories</div>
<div class="t" style="left:580.3px;top:1129px;font-size:13.89px;line-height:18px;color:#222;letter-spacing:0.17px;-webkit-text-stroke:.12px #222">44.5%</div>
<div class="t" style="left:580.3px;top:1149px;font-size:10.21px;line-height:13px;color:#8a8a8a;letter-spacing:-0.15px;">Video</div>
<div class="t" style="left:356.0px;top:1096px;font-size:13.8px;line-height:17px;color:#222;letter-spacing:0.12px;-webkit-text-stroke:.12px #222">33.5%</div>
<div class="t" style="left:376.9px;top:1114px;font-size:10.2px;line-height:13px;color:#8a8a8a;letter-spacing:-0.82px;">LIVE</div>
<div class="t" style="left:386.5px;top:1201px;font-size:13.94px;line-height:18px;color:#222;letter-spacing:0.20px;-webkit-text-stroke:.12px #222">23.0%</div>
<div class="t" style="left:397.5px;top:1221px;font-size:10.3px;line-height:13px;color:#8a8a8a;letter-spacing:-0.10px;">Others</div>
<div class="t" style="left:421.8px;top:1255px;font-size:10.54px;line-height:14px;color:#8a8a8a;letter-spacing:0.02px;">Video</div>
<div class="t" style="left:471.2px;top:1256px;font-size:10.2px;line-height:13px;color:#8a8a8a;letter-spacing:-0.62px;">LIVE</div>
<div class="t" style="left:513.7px;top:1256px;font-size:10.26px;line-height:13px;color:#8a8a8a;letter-spacing:-0.12px;">Others</div>
<div class="t" style="left:992.6px;top:1126px;font-size:14.03px;line-height:18px;color:#222;letter-spacing:0.25px;-webkit-text-stroke:.12px #222">44.5%</div>
<div class="t" style="left:992.6px;top:1146px;font-size:10.27px;line-height:13px;color:#8a8a8a;letter-spacing:-0.13px;">Food</div>
<div class="t" style="left:791.2px;top:1070px;font-size:13.52px;line-height:17px;color:#222;letter-spacing:-0.04px;-webkit-text-stroke:.12px #222">10.2%</div>
<div class="t" style="left:799.0px;top:1087px;font-size:10.5px;line-height:14px;color:#8a8a8a;">Others</div>
<div class="t" style="left:763.5px;top:1138px;font-size:13.19px;line-height:17px;color:#222;letter-spacing:-0.22px;-webkit-text-stroke:.12px #222">11.0%</div>
<div class="t" style="left:764.5px;top:1156px;font-size:10.24px;line-height:13px;color:#8a8a8a;letter-spacing:-0.13px;">Fashion</div>
<div class="t" style="left:803.6px;top:1198px;font-size:13.17px;line-height:17px;color:#222;letter-spacing:-0.24px;-webkit-text-stroke:.12px #222">25.1%</div>
<div class="t" style="left:778.3px;top:1217px;font-size:10.33px;line-height:13px;color:#8a8a8a;letter-spacing:-0.08px;">Personal care</div>
<div class="t" style="left:791.2px;top:1253px;font-size:10.08px;line-height:13px;color:#8a8a8a;letter-spacing:-0.24px;">Food</div>
<div class="t" style="left:836.5px;top:1253px;font-size:10.32px;line-height:13px;color:#8a8a8a;letter-spacing:-0.08px;">Personal care</div>
<div class="t" style="left:922.0px;top:1253px;font-size:10.21px;line-height:13px;color:#8a8a8a;letter-spacing:-0.15px;">Fashion</div>
<div class="t" style="left:980.6px;top:1253px;font-size:10.4px;line-height:13px;color:#8a8a8a;letter-spacing:-0.05px;">Beauty</div>
</div>
</body>
</html>
